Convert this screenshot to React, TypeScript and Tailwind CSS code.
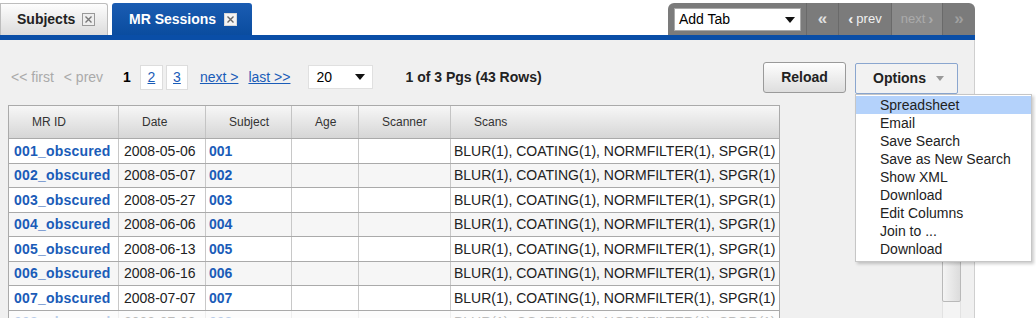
import React from "react";

const rows = [
  ["001_obscured", "2008-05-06", "001"],
  ["002_obscured", "2008-05-07", "002"],
  ["003_obscured", "2008-05-27", "003"],
  ["004_obscured", "2008-06-06", "004"],
  ["005_obscured", "2008-06-13", "005"],
  ["006_obscured", "2008-06-16", "006"],
  ["007_obscured", "2008-07-07", "007"],
  ["008_obscured", "2008-07-08", "008"],
];

const menuItems = [
  "Spreadsheet",
  "Email",
  "Save Search",
  "Save as New Search",
  "Show XML",
  "Download",
  "Edit Columns",
  "Join to ...",
  "Download",
];

function CloseBox({ light }: { light?: boolean }) {
  return (
    <span
      className={
        "inline-flex w-[13px] h-[13px] items-center justify-center border " +
        (light ? "border-[#d8d8d8] bg-[#f4f4f4]" : "border-[#999] bg-[#eee]")
      }
    >
      <svg width="7" height="7" viewBox="0 0 7 7">
        <path d="M0.5 0.5 L6.5 6.5 M6.5 0.5 L0.5 6.5" stroke={light ? "#666" : "#777"} strokeWidth="1.4" />
      </svg>
    </span>
  );
}

export default function App() {
  return (
    <div className="relative w-[1036px] h-[318px] overflow-hidden bg-white font-['Liberation_Sans',Arial,sans-serif] text-[14px] text-[#222]">
      {/* Tab bar */}
      <div className="flex h-[35px] items-end w-[975px]">
        <div className="flex items-center h-[32px] w-[108px] pl-[16px] gap-[7px] border border-b-0 border-[#bdbdbd] rounded-tr-[3px] bg-gradient-to-b from-[#fdfdfd] to-[#dcdcdc] font-bold text-[14px] text-[#222]">
          <span>Subjects</span>
          <CloseBox />
        </div>
        <div className="ml-[4px] flex items-center h-[32px] w-[140px] pl-[17px] gap-[8px] rounded-t-[3px] bg-gradient-to-b from-[#1a5cb2] to-[#0a4c9f] font-bold text-white text-[14px]">
          <span>MR Sessions</span>
          <CloseBox light />
        </div>
        <div className="ml-auto flex h-[32px] w-[307px] rounded-t-[6px] bg-[#7b7b7b] pl-[6px] pt-[5px] pb-[4px]">
          <div className="flex items-center justify-between w-[127px] h-[23px] bg-white border border-[#aaa] pl-[4px] pr-[5px] text-[14px] text-black">
            <span>Add Tab</span>
            <svg width="10" height="6" viewBox="0 0 10 6">
              <path d="M0 0 H10 L5 6 Z" fill="#111" />
            </svg>
          </div>
          <div className="flex -mt-[5px] -mb-[4px] ml-[5px] flex-1">
            <div className="w-[32px] border-l border-[#6a6a6a] flex items-center justify-center text-[#e0e0e0] font-bold text-[17px]">«</div>
            <div className="w-[53px] border-l border-[#6a6a6a] flex items-center justify-center text-[#f0f0f0] text-[13px] gap-[3px]">
              <span className="font-bold text-[15px]">‹</span>
              <span>prev</span>
            </div>
            <div className="w-[51px] border-l border-[#6a6a6a] bg-[#8a8a8a] flex items-center justify-center text-[#ababab] text-[13px] gap-[3px]">
              <span>next</span>
              <span className="font-bold text-[15px]">›</span>
            </div>
            <div className="flex-1 border-l border-[#6a6a6a] rounded-tr-[6px] flex items-center justify-center text-[#a0a0a0] font-bold text-[17px]">»</div>
          </div>
        </div>
      </div>
      <div className="w-[975px] h-[5px] bg-[#0a4ea7]" />

      {/* Panel */}
      <div className="w-[975px] h-[300px] bg-[#f0f0f0] border-r border-[#cfcfcf]">
        {/* Pagination */}
        <div className="flex items-center h-[32px] pt-[21px] box-content pl-[11px] pr-[16px]">
          <span className="text-[#aaa]">&lt;&lt; first</span>
          <span className="ml-[10px] text-[#aaa]">&lt; prev</span>
          <span className="ml-[20px] font-bold text-black">1</span>
          <span className="ml-[9px] w-[23px] h-[25px] bg-white border border-[#ddd] flex items-center justify-center text-[#1a5cb8] underline">2</span>
          <span className="ml-[3px] w-[22px] h-[25px] bg-white border border-[#ddd] flex items-center justify-center text-[#1a5cb8] underline">3</span>
          <span className="ml-[12px] text-[#1a5cb8] underline">next &gt;</span>
          <span className="ml-[10px] text-[#1a5cb8] underline">last &gt;&gt;</span>
          <div className="ml-[18px] w-[65px] h-[24px] bg-white border border-[#e0e0e0] flex items-center justify-between pl-[7px] pr-[7px] text-black">
            <span>20</span>
            <svg width="10" height="6" viewBox="0 0 10 6">
              <path d="M0 0 H10 L5 6 Z" fill="#111" />
            </svg>
          </div>
          <span className="ml-[32px] font-bold text-[#222]">1 of 3 Pgs (43 Rows)</span>
          <div className="ml-auto w-[83px] h-[31px] flex items-center justify-center border border-[#9a9a9a] rounded-[3px] bg-gradient-to-b from-[#fefefe] to-[#dedede] font-bold text-[#222]">
            Reload
          </div>
          <div className="ml-[9px] mt-[2px] w-[103px] h-[31px] flex items-center justify-center gap-[10px] border border-[#8aa6cf] rounded-[2px] bg-[#f2f2f2] font-bold text-[#222] pl-[4px]">
            <span>Options</span>
            <svg width="8" height="5" viewBox="0 0 8 5">
              <path d="M0 0 H8 L4 5 Z" fill="#999" />
            </svg>
          </div>
        </div>

        {/* Table area */}
        <div className="flex mt-[12px]">
          <div className="ml-[8px] w-[772px] border border-b-0 border-[#aaaaaa] bg-white">
            <div className="flex h-[33px] border-b border-[#aaaaaa] bg-gradient-to-b from-[#f7f7f7] to-[#d6d6d6] text-[12px] text-[#333]">
              {[
                ["MR ID", "w-[110px]"],
                ["Date", "w-[87px]"],
                ["Subject", "w-[86px]"],
                ["Age", "w-[67px]"],
                ["Scanner", "w-[92px]"],
                ["Scans", "flex-1"],
              ].map(([t, w], i) => (
                <div
                  key={i}
                  className={
                    w +
                    " flex items-center pl-[23px] " +
                    (i < 5 ? "border-r border-[#c4c4c4]" : "")
                  }
                >
                  {t}
                </div>
              ))}
            </div>
            {rows.map((r, i) => (
              <div
                key={i}
                className={
                  "flex border-b border-[#aaaaaa] " +
                  (i % 2 === 0 ? "h-[25px] bg-white " : "h-[24px] bg-[#f6f6f6] ") +
                  (i === 7 ? "opacity-30" : "")
                }
              >
                <div className="w-[110px] border-r border-[#c8c8c8] flex items-center pl-[5px] font-bold text-[#1a5cb8] tracking-[0.2px]">
                  {r[0]}
                </div>
                <div className="w-[87px] border-r border-[#c8c8c8] flex items-center pl-[5px] text-[#222]">
                  {r[1]}
                </div>
                <div className="w-[86px] border-r border-[#c8c8c8] flex items-center pl-[3px] font-bold text-[#1a5cb8]">
                  {r[2]}
                </div>
                <div className="w-[67px] border-r border-[#c8c8c8]" />
                <div className="w-[92px] border-r border-[#c8c8c8]" />
                <div className="flex-1 flex items-center pl-[3px] text-[#222]">
                  BLUR(1), COATING(1), NORMFILTER(1), SPGR(1)
                </div>
              </div>
            ))}
          </div>
          {/* Scrollbar */}
          <div className="ml-auto mr-[13px] w-[19px] flex flex-col h-[230px] bg-[#f4f4f4] border-x border-[#e2e2e2]">
            <div className="h-[197px] -mx-[1px] border border-[#b9b9b9] rounded-b-[2px] bg-gradient-to-r from-[#f4f4f4] to-[#dcdcdc]" />
          </div>
        </div>
      </div>

      {/* Options dropdown menu */}
      <div className="absolute left-[855px] top-[94px] w-[177px] bg-white border border-[#c6c6c6] shadow-[2px_2px_3px_rgba(0,0,0,0.2)] pt-[1px] pb-[3px]">
        {menuItems.map((m, i) => (
          <div
            key={i}
            className={
              "h-[18px] leading-[18px] pl-[24px] text-[14px] text-[#222] " +
              (i === 0 ? "bg-[#b4d2fb]" : "")
            }
          >
            {m}
          </div>
        ))}
      </div>
    </div>
  );
}
